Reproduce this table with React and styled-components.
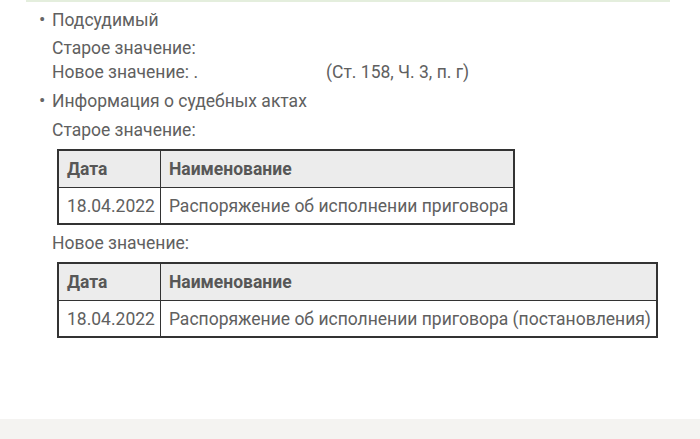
import React from 'react';
import styled, { createGlobalStyle } from 'styled-components';

const GlobalStyle = createGlobalStyle`
    html, body, #root {
        height: 100%;
    }
    body {
        margin: 0;
        background: #ffffff;
        font-family: Roboto, "Noto Sans", sans-serif;
        color: #606060;
    }
`;

const Page = styled.div`
    display: flex;
    flex-direction: column;
    min-height: 100%;
`;

const CardEdge = styled.div`
    height: 2px;
    margin: 0 30px 0 26px;
    background: #e4eedd;
`;

const List = styled.ul`
    list-style: none;
    margin: 0;
    padding: 6px 0 0 52px;
    font-size: 17.5px;
    line-height: 24px;
`;

const Item = styled.li`
    position: relative;
    & + & {
        margin-top: 5px;
    }
    &::before {
        content: "\u2022";
        position: absolute;
        left: -13px;
        top: 0;
        font-size: 19px;
        color: #666;
    }
`;

const Title = styled.div`
    margin-bottom: ${ props => props.$gap || 4 }px;
`;

const Line = styled.div`
    white-space: nowrap;
`;

const Redacted = styled.span`
    display: inline-block;
    width: ${ props => props.$width }px;
`;

const Label = styled.div`
    margin-top: ${ props => props.$top || 0 }px;
`;

const Table = styled.table`
    border-collapse: collapse;
    margin: 7px 0 0 5px;
    border: 2px solid #333;

    th, td {
        border: 1.5px solid #333;
        padding: 0 5px 0 8px;
        text-align: left;
        white-space: nowrap;
    }

    th {
        height: 36px;
        background: #ececec;
        font-weight: 700;
        color: #575757;
    }

    td {
        height: 35px;
        color: #606060;
    }
`;

const Footer = styled.div`
    margin-top: auto;
    height: 20px;
    background: #f4f3f1;
`;

const ActsTable = ( { name } ) => (
    <Table>
        <thead>
            <tr>
                <th>Дата</th>
                <th>Наименование</th>
            </tr>
        </thead>
        <tbody>
            <tr>
                <td>18.04.2022</td>
                <td>{ name }</td>
            </tr>
        </tbody>
    </Table>
);

const App = () => (
    <Page>
        <GlobalStyle />
        <CardEdge />
        <List>
            <Item>
                <Title>Подсудимый</Title>
                <Line>Старое значение:</Line>
                <Line>
                    Новое значение: .<Redacted $width={ 128 } />(Ст. 158, Ч. 3, п. г)
                </Line>
            </Item>
            <Item>
                <Title $gap={ 5 }>Информация о судебных актах</Title>
                <Label>Старое значение:</Label>
                <ActsTable name="Распоряжение об исполнении приговора" />
                <Label $top={ 6 }>Новое значение:</Label>
                <ActsTable name="Распоряжение об исполнении приговора (постановления)" />
            </Item>
        </List>
        <Footer />
    </Page>
);

export default App;
